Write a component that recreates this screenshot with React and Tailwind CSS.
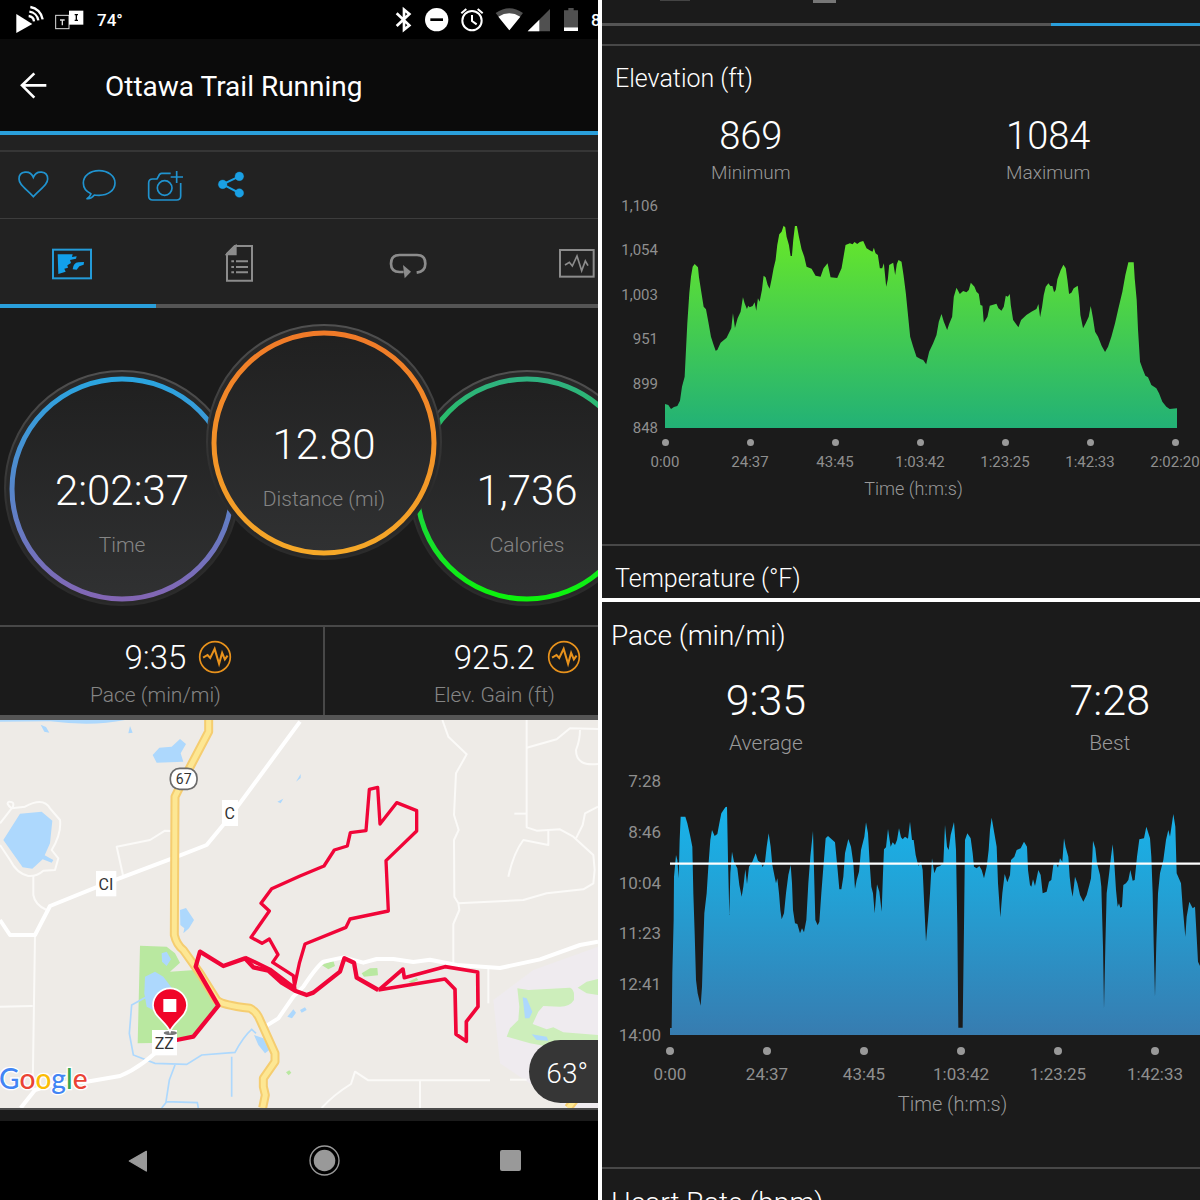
import React from "react";

const ELEVATION =
  "195,642 205,645 213,657 222,651 232,648 240,632 246,590 254,560 258,480 262,400 268,310 273,260 278,230 284,222 294,232 297,262 303,300 311,350 318,358 325,395 333,440 340,462 347,482 352,480 362,458 380,443 394,415 399,370 405,414 413,385 422,365 429,322 434,340 441,357 445,347 449,352 458,348 464,337 469,362 474,325 479,335 486,300 491,257 497,262 503,284 509,296 515,268 521,235 527,210 532,165 538,133 545,125 551,107 556,112 560,140 567,165 572,198 576,198 580,150 585,108 591,108 597,140 605,178 613,200 620,230 635,236 647,257 662,260 671,235 683,220 692,262 712,264 725,235 731,200 737,165 750,160 758,163 764,156 772,162 780,156 790,153 800,175 812,182 818,185 822,173 827,190 834,195 840,235 847,235 852,220 859,290 864,268 868,225 880,218 886,255 891,222 896,210 905,215 911,255 918,310 925,380 931,440 940,470 950,500 962,507 970,510 979,523 988,485 1000,460 1010,435 1017,395 1025,372 1032,395 1042,420 1048,402 1057,380 1062,320 1070,293 1080,312 1090,303 1100,307 1107,300 1113,278 1124,290 1130,305 1137,312 1142,345 1148,347 1152,398 1163,380 1170,347 1190,341 1196,355 1205,362 1212,350 1218,317 1224,320 1230,312 1233,345 1240,390 1256,412 1264,390 1280,375 1295,365 1310,357 1316,342 1321,382 1327,350 1332,315 1338,290 1346,280 1352,288 1358,288 1363,307 1368,300 1373,268 1383,240 1391,224 1398,235 1403,270 1408,312 1415,308 1422,295 1434,287 1438,320 1442,375 1450,415 1458,400 1467,380 1473,348 1479,380 1486,425 1495,440 1506,468 1516,486 1525,470 1535,440 1546,400 1555,360 1568,305 1577,255 1586,217 1602,217 1605,265 1611,330 1615,420 1621,515 1630,540 1637,557 1645,562 1655,585 1670,595 1678,610 1688,635 1700,650 1710,657 1732,655 1732,714 195,714";

const PACE =
  "210,825 210,804 215,804 217,640 221,480 222,350 228,285 232,300 236,355 239,240 242,170 256,170 262,190 270,225 277,260 280,400 284,520 288,660 293,700 302,737 306,680 309,580 313,460 320,400 325,320 331,240 336,210 344,228 352,222 358,190 364,160 376,142 381,140 384,300 388,465 391,340 396,275 402,305 412,325 418,375 425,410 430,380 436,328 441,372 447,320 457,305 467,280 474,302 483,308 488,322 495,305 500,260 506,220 512,260 517,315 524,350 528,370 532,355 537,400 541,450 545,478 552,460 558,400 565,345 572,315 576,370 579,450 585,490 592,492 600,520 606,505 612,517 619,480 625,370 631,290 639,213 642,330 646,480 653,496 658,485 664,400 671,310 677,235 684,228 705,247 712,320 718,388 724,388 730,350 735,280 745,237 753,260 760,310 765,387 770,360 777,335 783,270 793,230 798,187 804,220 809,310 814,380 819,400 824,460 831,373 838,395 845,455 849,340 852,268 858,262 864,207 872,260 878,247 885,255 891,240 897,205 903,232 908,238 915,230 924,236 930,185 936,240 941,240 947,285 955,318 963,305 968,330 973,440 978,545 984,480 990,400 996,295 1003,340 1010,322 1020,318 1030,310 1035,195 1041,260 1046,270 1052,225 1062,186 1068,270 1072,500 1075,803 1088,803 1092,500 1095,240 1102,220 1112,235 1118,280 1122,320 1130,325 1138,318 1145,330 1152,355 1160,320 1166,270 1170,210 1175,173 1183,220 1190,260 1194,370 1201,472 1207,400 1214,342 1222,367 1230,345 1233,300 1243,290 1250,270 1262,265 1272,245 1281,260 1284,330 1290,375 1294,380 1299,358 1305,378 1315,330 1322,345 1328,400 1340,395 1347,365 1354,360 1360,315 1368,310 1374,323 1380,295 1387,305 1392,235 1397,262 1405,290 1409,350 1413,385 1418,410 1425,350 1432,370 1440,405 1450,425 1460,405 1468,375 1473,355 1477,290 1479,242 1486,265 1491,310 1500,345 1504,380 1509,560 1512,748 1516,560 1520,400 1528,335 1533,290 1538,253 1543,310 1548,390 1553,440 1557,430 1561,443 1566,440 1570,375 1578,370 1585,360 1591,330 1598,362 1604,360 1611,290 1618,238 1632,235 1639,200 1650,235 1654,290 1658,400 1661,550 1665,711 1669,550 1674,400 1680,340 1690,300 1698,240 1705,210 1710,230 1720,162 1726,200 1730,340 1743,370 1748,440 1756,530 1760,470 1768,425 1778,445 1785,440 1790,530 1794,605 1800,618 1800,825";

function StatusBar() {
  return (
    <div className="flex h-[39px] shrink-0 items-center bg-black pl-[15px] text-white">
      <svg viewBox="45 15 90 90" className="h-[30px] w-[30px] shrink-0" fill="none" stroke="#fff" strokeWidth="7">
        <path d="M49 42L97 72L49 99Z" fill="#fff" stroke="none" />
        <path d="M91 21A44 44 0 0 1 128 58M88 35A31 31 0 0 1 115 61M86 48A18 18 0 0 1 102 64" />
      </svg>
      <svg viewBox="162 27 93 63" className="ml-[9px] h-[21px] w-[31px] shrink-0">
        <rect x="167" y="46" width="40" height="40" fill="none" stroke="#ddd" strokeWidth="3" />
        <rect x="207" y="32" width="43" height="42" fill="#fff" />
        <path d="M180 60H194M187 60V76" stroke="#ddd" strokeWidth="4" />
        <path d="M224 44H234M229 44V61M224 61H234" stroke="#000" strokeWidth="4" />
      </svg>
      <span className="ml-3 text-[17px] font-medium leading-5">74°</span>
      <div className="ml-auto flex shrink-0 items-center gap-1">
        <svg viewBox="273 18 84 81" className="h-[27px] w-7" fill="none" stroke="#fff" strokeWidth="8">
          <path d="M290 40L328 76L312 89V29L328 42L290 78" />
        </svg>
        <svg viewBox="369 18 96 81" className="h-[27px] w-8">
          <circle cx="410" cy="59" r="35" fill="#fff" />
          <path d="M391 59H429" stroke="#000" strokeWidth="8" />
        </svg>
        <svg viewBox="477 18 96 81" className="h-[27px] w-8" fill="none" stroke="#fff" strokeWidth="6">
          <circle cx="516" cy="62" r="29" />
          <path d="M516 45V63L530 73M484 40L499 27M533 27L548 40" />
        </svg>
        <svg viewBox="585 18 84 81" className="h-[27px] w-7">
          <path d="M587 39Q628 10 669 39L628 91Z" fill="#505050" />
          <path d="M595 50Q628 30 661 50L628 91Z" fill="#fff" />
        </svg>
        <svg viewBox="681 18 72 81" className="h-[27px] w-6">
          <path d="M750 27V94H683Z" fill="#505050" />
          <path d="M718 59V94H683Z" fill="#fff" />
        </svg>
        <svg viewBox="765 18 72 81" className="h-[27px] w-6">
          <path d="M805 24H821V31H834V82H792V31H805Z" fill="#505050" />
          <path d="M792 82H834V93H792Z" fill="#fff" />
        </svg>
        <span className="w-[15px] overflow-hidden pl-2 text-[17px] font-medium leading-5">8</span>
      </div>
    </div>
  );
}

function Actions() {
  const cls = "h-10 w-9";
  const btn = "flex h-full w-[66px] items-center justify-center";
  return (
    <div className="flex h-[66px] shrink-0 items-center">
      <button aria-label="Like" className={btn}>
        <svg viewBox="45 495 108 120" className={cls} fill="none" stroke="#2093cf" strokeWidth="5">
          <path d="M100 590C78 566 57 555 57 537C57 512 91 509 100 532C109 509 143 512 143 537C143 555 122 566 100 590Z" />
        </svg>
      </button>
      <button aria-label="Comment" className={btn}>
        <svg viewBox="243 495 108 120" className={cls} fill="none" stroke="#2093cf" strokeWidth="5" strokeLinejoin="round">
          <path d="M273 581C257 574 250 563 250 549C250 528 270 512 297 512C324 512 345 528 345 549C345 571 324 586 297 586C291 586 286 586 283 585C276 594 268 597 261 596C268 592 271 587 273 581Z" />
        </svg>
      </button>
      <button aria-label="Add photo" className={btn}>
        <svg viewBox="441 495 108 120" className={cls} fill="none" stroke="#2093cf" strokeWidth="5">
          <path d="M512 520H485Q478 520 475 530L471 537H458Q446 537 446 549V588Q446 600 458 600H530Q542 600 542 588V549M530 513V549M512 531H549" />
          <circle cx="494" cy="564" r="22" />
        </svg>
      </button>
      <button aria-label="Share" className={btn}>
        <svg viewBox="636 495 108 120" className={cls} fill="#1aa0e4" stroke="#1aa0e4">
          <path d="M715 529L665 553L715 579" fill="none" strokeWidth="6" />
          <circle cx="665" cy="553" r="13" />
          <circle cx="715" cy="529" r="13" />
          <circle cx="715" cy="579" r="13" />
        </svg>
      </button>
    </div>
  );
}

function Tabs() {
  const tab = "flex h-[89px] w-[168px] shrink-0 items-center justify-center border-b-4 pt-1";
  return (
    <div className="-ml-3 flex shrink-0">
      <button aria-label="Overview" className={tab + " border-[#2a9fdb]"}>
        <svg viewBox="153 738 126 102" className="h-[34px] w-[42px]">
          <rect x="159" y="746" width="114" height="86" fill="none" stroke="#249bd8" strokeWidth="6" />
          <path d="M173 760H218L216 768L230 766L228 773L210 777L213 786L202 793L204 800L193 803L197 812L175 819ZM252 783L251 791L238 796L230 806L218 805Q220 785 235 784Z" fill="#12a0ea" />
        </svg>
      </button>
      <button aria-label="Details" className={tab + " border-[#555]"}>
        <svg viewBox="678 732 90 117" className="h-[39px] w-[30px]" fill="none" stroke="#8c8c8c" strokeWidth="6">
          <path d="M707 738H759V842H684V761Z" />
          <path d="M684 763L710 738V763Z" fill="#8c8c8c" />
          <path d="M697 784H705M711 784H747M697 801H705M711 801H747M697 817H705M711 817H747" />
        </svg>
      </button>
      <button aria-label="Laps" className={tab + " border-[#555]"}>
        <svg viewBox="267 732 120 117" className="h-[39px] w-10" fill="none" stroke="#8c8c8c" strokeWidth="8">
          <path d="M314 816H302Q276 815 276 791Q276 765 302 765H354Q379 765 379 791Q379 814 353 818" />
          <path d="M312 795L336 815L317 835Z" fill="#8c8c8c" stroke="none" />
        </svg>
      </button>
      <button aria-label="Charts" className={tab + " border-[#555]"}>
        <svg viewBox="774 744 114 96" className="h-8 w-[38px]" fill="none" stroke="#8c8c8c">
          <rect x="783" y="750" width="101" height="80" strokeWidth="6" />
          <path d="M798 795L811 787L820 798L834 768L848 812L859 783L867 797" strokeWidth="5" />
        </svg>
      </button>
    </div>
  );
}

function Gauge({ id, value, label, from, to, className }) {
  return (
    <div className={"relative h-[236px] w-[236px] shrink-0 text-center " + className}>
      <svg viewBox="0 0 236 236" className="absolute inset-0 h-full w-full">
        <defs>
          <linearGradient id={id + "-ring"} x1="0" y1="0" x2="0" y2="1">
            <stop offset="0" stopColor={from} />
            <stop offset="1" stopColor={to} />
          </linearGradient>
          <linearGradient id={id + "-face"} x1="0" y1="0" x2="0" y2="1">
            <stop offset="0" stopColor="#202020" />
            <stop offset="1" stopColor="#303132" />
          </linearGradient>
          <linearGradient id={id + "-edge"} x1="0" y1="0" x2="0" y2="1">
            <stop offset="0" stopColor="#505050" />
            <stop offset="0.7" stopColor="#2b2b2b" />
          </linearGradient>
        </defs>
        <circle cx="118" cy="118" r="117" fill="#282828" stroke={"url(#" + id + "-edge)"} strokeWidth="2" />
        <circle cx="118" cy="119" r="110" fill={"url(#" + id + "-face)"} stroke={"url(#" + id + "-ring)"} strokeWidth="5" />
      </svg>
      <div className="relative pt-[97px]">
        <div className="text-[42px] font-light leading-[48px] text-white">{value}</div>
        <div className="mt-[18px] text-[21px] font-light leading-6 text-[#858585]">{label}</div>
      </div>
    </div>
  );
}

function Stat({ value, label, className }) {
  return (
    <div className={"flex shrink-0 flex-col items-center pb-2 pt-[11px] " + className}>
      <div className="relative">
        <span className="block text-[33px] font-light leading-10 text-white">{value}</span>
        <button aria-label={"Show chart of " + label} className="absolute left-full top-0.5 ml-3">
          <svg viewBox="597 60 100 100" className="h-[34px] w-[34px]" fill="none" stroke="#e8921c" strokeWidth="5">
            <circle cx="647" cy="110" r="45" />
            <path d="M612 112L625 104L633 113L646 86L659 130L668 98L676 117L684 106" strokeWidth="6" />
          </svg>
        </button>
      </div>
      <span className="mt-[5px] text-[21px] font-light leading-6 text-[#858585]">{label}</span>
    </div>
  );
}

const MINOR_ROADS = [
  "M1327 300L1345 350L1400 403L1368 460L1362 585L1376 630L1362 660L1363 830L1375 850L1378 870L1360 912V1030",
  "M1375 850L1570 840L1640 820L1750 808L1780 790L1784 750L1780 705L1720 650L1680 628L1610 632L1580 622V300",
  "M1580 383L1670 358L1710 325L1794 327",
  "M1740 330Q1740 360 1728 390Q1728 440 1794 432",
  "M1645 628V675L1570 660Q1540 700 1525 770",
  "M1794 560L1755 580L1748 615L1728 655",
  "M1543 581H1578",
  "M1465 1040V1150",
  "M965 1464Q1000 1425 1053 1392L1065 1355L1105 1381H1470M1260 1381V1464M1530 1379H1580",
  "M105 945L98 1410M0 1160L98 1158",
  "M100 765V825Q105 855 140 870",
  "M35 565L75 560Q130 530 150 565L180 600Q185 640 155 690L175 715L165 750L130 752Q110 770 85 768Q50 760 30 720L0 675",
  "M0 610L35 565Q15 550 28 545Q45 545 38 562",
  "M370 770L350 680L450 660L495 632L515 633",
];

const HIGHWAY =
  "M626 300V335L555 470L525 530L523 945Q530 975 550 990L600 1060L650 1140Q665 1155 750 1165Q770 1175 780 1200L825 1300V1325L790 1375V1400L796 1425L788 1464M1705 1464L1735 1425";

function RouteMap() {
  return (
    <svg viewBox="0 300 1794 1164" className="block w-full bg-[#eeebe7]" role="img" aria-label="Route map">
      <path d="M1480 1140L1600 1050L1794 980V1464H1700L1500 1330Z" fill="#efebef" />
      <g fill="#b9e8a0">
        <path d="M420 977L500 980L525 1000L540 1028L510 1055L585 1050L655 1155L580 1250L500 1268L413 1270Z" />
        <path d="M965 1035L1000 1022L1005 1038L985 1048ZM1085 1060L1110 1045L1132 1044L1134 1066L1092 1070ZM1225 1085L1250 1073L1255 1080L1235 1090ZM858 1357L868 1351L874 1358L866 1366Z" />
        <path d="M1552 1105L1585 1110L1710 1103Q1722 1108 1722 1125V1140Q1710 1160 1680 1160L1630 1158L1615 1175L1598 1212L1640 1228L1660 1222L1690 1237L1794 1245V1290H1700L1590 1270L1520 1250L1530 1225L1555 1200L1558 1160ZM1733 1103L1760 1085L1794 1077V1125L1760 1120Z" fill="#cdeebb" />
      </g>
      <g fill="#add8fd">
        <path d="M60 581L125 575L157 602L150 670L134 706L160 720L155 728L128 718L97 746L68 742L10 660Z" />
        <path d="M478 383L515 380L540 357L558 372L542 400L550 425L470 428L458 405Z" />
        <path d="M122 314L138 321L148 338L133 335ZM390 318L398 338L385 340ZM0 300H375Q280 320 150 304L0 305ZM832 545L850 536L842 550ZM888 485L902 462V474Z" />
        <path d="M540 870L558 864L582 900L567 925L550 940L553 925L541 915ZM485 1000L500 995L513 1018L500 1038L486 1025Z" />
        <path d="M435 1070L465 1055L490 1070L520 1110L500 1190L440 1160L433 1120Z" />
        <path d="M762 1245L790 1255L808 1290L795 1300L775 1275ZM862 1190L880 1168L888 1178L876 1195ZM900 1170L915 1162L920 1170L905 1178Z" />
        <path d="M1568 1132L1580 1135L1597 1175L1588 1195L1575 1195ZM1595 1243L1640 1250L1645 1262L1610 1260Z" />
      </g>
      <path d="M440 1130L395 1155L388 1240L400 1305L465 1330L560 1333L605 1305L705 1297Q730 1250 755 1228L768 1240M525 1335L508 1380L498 1445L592 1448L595 1464M695 1310V1430M500 1445L485 1464" fill="none" stroke="#add8fd" strokeWidth="5" />
      <g fill="none" stroke="#fbfaf8" strokeWidth="6" strokeLinejoin="round">
        {MINOR_ROADS.map((d) => (
          <path key={d} d={d} />
        ))}
      </g>
      <path
        d="M900 305L690 590L620 675L525 712L318 790L150 858L105 945H30L0 900M500 1265Q430 1340 360 1368L260 1385L170 1390L105 1410L62 1464M795 1220L835 1195L880 1130L910 1100Q950 1040 970 1025L1030 1012L1090 1028L1130 1017H1180L1240 1026L1290 1019L1370 1035L1500 1044L1620 1018L1740 975L1794 965"
        fill="none"
        stroke="#fff"
        strokeWidth="12"
        strokeLinejoin="round"
      />
      <g fill="none" strokeLinejoin="round">
        <path d={HIGHWAY} stroke="#f5cd70" strokeWidth="27" />
        <path d={HIGHWAY} stroke="#fde793" strokeWidth="15" />
      </g>
      <g fill="none" stroke="#f00538" strokeLinejoin="round">
        <path d="M530 1260L580 1250L655 1157L587 1040L600 995L670 1038L735 1015L760 1042L805 1052L845 1088L885 1112L920 1125L940 1118L1020 1055L1033 1015L1062 1028L1070 1073L1135 1110" strokeWidth="13" />
        <path d="M735 1012L810 1048L885 1105M1135 1110L1335 1077L1365 1108L1368 1243L1399 1264V1205L1434 1160L1433 1056L1335 1040L1213 1073L1209 1047L1140 1107" strokeWidth="11" />
        <path d="M885 1110L880 1067L818 1027L834 1004L808 957L786 970L753 952L808 873L783 850L815 806L900 768L972 738L1003 690L1042 678L1051 638L1098 632L1108 508L1133 502L1140 612L1190 548L1250 572V633L1158 722L1165 873L1050 897L1038 922L915 972L898 1030L882 1105" strokeWidth="10" />
      </g>
      <g fontFamily="Roboto, sans-serif" fill="#333" textAnchor="middle">
        <rect x="511" y="445" width="80" height="63" rx="28" fill="#fff" stroke="#6b6b6b" strokeWidth="5" />
        <text x="551" y="491" fontSize="42">67</text>
        <rect x="666" y="540" width="48" height="78" fill="#fff" />
        <text x="689" y="598" fontSize="48">C</text>
        <rect x="288" y="753" width="61" height="76" fill="#fff" />
        <text x="318" y="810" fontSize="48">CI</text>
        <rect x="456" y="1230" width="75" height="76" fill="#fff" />
        <text x="493" y="1287" fontSize="48">ZZ</text>
      </g>
      <ellipse cx="511" cy="1239" rx="20" ry="6" fill="#777" />
      <path d="M510 1235C500 1205 459 1190 459 1156A51 51 0 0 1 561 1156C561 1190 520 1205 510 1235Z" fill="#f00528" stroke="#fff" strokeWidth="5" />
      <rect x="490" y="1137" width="39" height="39" fill="#fff" />
      <text x="-3" y="1406" fontFamily="Lato, sans-serif" fontSize="84" fontWeight="500" stroke="#fff" strokeWidth="8" paintOrder="stroke">
        <tspan fill="#4285f4">G</tspan>
        <tspan fill="#ea4335">o</tspan>
        <tspan fill="#fbbc05">o</tspan>
        <tspan fill="#4285f4">g</tspan>
        <tspan fill="#34a853">l</tspan>
        <tspan fill="#ea4335">e</tspan>
      </text>
    </svg>
  );
}

function ActivityScreen() {
  return (
    <section className="row-span-2 flex min-w-0 flex-col overflow-hidden bg-[#1b1b1b]">
      <StatusBar />
      <header className="flex h-24 shrink-0 items-center border-b-4 border-[#2a9fdb] bg-[#0b0b0b] pl-[18px]">
        <button aria-label="Back">
          <svg viewBox="54 210 96 93" className="h-[31px] w-8" fill="none" stroke="#fff" strokeWidth="8">
            <path d="M139 256H66M103 220L66 256L103 293" />
          </svg>
        </button>
        <h1 className="ml-[55px] pt-1 text-[28px] leading-8 text-white">Ottawa Trail Running</h1>
      </header>
      <div className="bg-[#222]">
        <div className="h-[17px] border-b-2 border-[#363636]" />
        <Actions />
        <div className="border-b border-[#3d3d3d]" />
        <Tabs />
      </div>
      <div className="flex shrink-0 items-start pb-[19px] pl-1 pt-4">
        <Gauge id="time" value="2:02:37" label="Time" from="#2aa5e0" to="#8366b4" className="mt-[46px]" />
        <Gauge id="distance" value="12.80" label="Distance (mi)" from="#f07a28" to="#f5a828" className="z-10 -ml-[34px]" />
        <Gauge id="calories" value="1,736" label="Calories" from="#2fb180" to="#0cf30c" className="-ml-[33px] mt-[46px]" />
      </div>
      <div className="flex shrink-0 border-b-[5px] border-t-2 border-b-[#555] border-t-[#484848]">
        <Stat value="9:35" label="Pace (min/mi)" className="w-[54%] pr-3" />
        <Stat value="925.2" label="Elev. Gain (ft)" className="w-[57%] border-l-2 border-[#484848]" />
      </div>
      <div className="relative shrink-0">
        <RouteMap />
        <div className="absolute bottom-[5px] right-0 flex h-[63px] items-center rounded-l-full bg-[#363636] pl-[17px] pr-[10px] pt-1 text-[28px] font-light text-white">
          63°
        </div>
      </div>
      <div className="h-[13px] shrink-0 border-t-2 border-[#4a4a4a]" />
      <nav className="flex flex-1 items-center bg-black pl-[45px]">
        <button aria-label="Back" className="flex w-[186px] shrink-0 justify-center">
          <svg viewBox="384 746 60 72" className="h-6 w-5" fill="#999" stroke="#999" strokeWidth="4" strokeLinejoin="round">
            <path d="M388 782L439 753V812Z" />
          </svg>
        </button>
        <button aria-label="Home" className="flex w-[186px] shrink-0 justify-center">
          <svg viewBox="27 735 92 92" className="h-[31px] w-[31px]">
            <circle cx="73" cy="781" r="32" fill="#999" />
            <circle cx="73" cy="781" r="43" fill="none" stroke="#999" strokeWidth="4" />
          </svg>
        </button>
        <button aria-label="Recent apps" className="flex w-[186px] shrink-0 justify-center">
          <span className="h-[21px] w-[21px] rounded-[2px] bg-[#999]" />
        </button>
      </nav>
    </section>
  );
}

function XAxis({ ticks, dot, label }) {
  return (
    <div className="flex justify-between">
      {ticks.map((t) => (
        <div key={t} className="flex w-0 flex-col items-center">
          <span className={"rounded-full bg-[#999] " + dot} />
          <span className={"whitespace-nowrap leading-5 " + label}>{t}</span>
        </div>
      ))}
    </div>
  );
}

function Extreme({ value, label, big, small }) {
  return (
    <div className="text-center font-light">
      <div className={"leading-[48px] text-white " + big}>{value}</div>
      <div className={"leading-6 text-[#999] " + small}>{label}</div>
    </div>
  );
}

const TIMES = ["0:00", "24:37", "43:45", "1:03:42", "1:23:25", "1:42:33", "2:02:20"];

function ElevationPanel() {
  return (
    <section className="min-w-0 overflow-hidden bg-[#1b1b1b] text-[#8f8f8f]">
      <div className="h-[23px]">
        <svg viewBox="0 0 598 23" preserveAspectRatio="none" className="h-full w-full">
          <path d="M211 0H234V3H211Z" fill="#777" />
          <path d="M58 0H88V1H58Z" fill="#444" />
        </svg>
      </div>
      <div className="flex h-[3px] bg-[#555]">
        <div className="ml-auto w-1/4 bg-[#2a9fdb]" />
      </div>
      <div className="h-5 border-b-2 border-[#484848]" />
      <h2 className="pl-[13px] pt-[17px] text-[25px] font-light leading-8 text-white">Elevation (ft)</h2>
      <div className="mt-[17px] grid grid-cols-2 pr-[3px]">
        <Extreme value="869" label="Minimum" big="text-[38px]" small="pt-px text-[19px]" />
        <Extreme value="1084" label="Maximum" big="text-[38px]" small="pt-px text-[19px]" />
      </div>
      <div className="mt-[11px] flex pr-[23px]">
        <div className="mr-[7px] flex w-14 shrink-0 flex-col justify-between text-right text-[15px] leading-5">
          {["1,106", "1,054", "1,003", "951", "899", "848"].map((t) => (
            <span key={t}>{t}</span>
          ))}
        </div>
        <div className="min-w-0 flex-1 py-[10px]">
          <svg viewBox="195 48 1537 666" preserveAspectRatio="none" className="block h-[222px] w-full">
            <linearGradient id="elev" gradientUnits="userSpaceOnUse" x1="0" y1="48" x2="0" y2="714">
              <stop offset="0" stopColor="#6fee20" />
              <stop offset="1" stopColor="#22b176" />
            </linearGradient>
            <polygon points={ELEVATION} fill="url(#elev)" />
          </svg>
        </div>
      </div>
      <div className="mt-px pl-[63px] pr-[25px]">
        <XAxis ticks={TIMES} dot="h-[7px] w-[7px]" label="mt-[6px] text-[15px]" />
      </div>
      <p className="mt-[5px] pl-[25px] text-center text-[18px] font-light leading-6 text-[#999]">Time (h:m:s)</p>
      <div className="mt-[43px] border-t-2 border-[#484848] pb-[3px] pl-[13px] pt-[17px]">
        <h2 className="text-[25px] font-light leading-8 text-white">Temperature (°F)</h2>
      </div>
    </section>
  );
}

function PacePanel() {
  return (
    <section className="min-w-0 overflow-hidden bg-[#1b1b1b] text-[#8f8f8f]">
      <h2 className="pl-[9px] pt-[18px] text-[28px] font-light leading-8 text-white">Pace (min/mi)</h2>
      <div className="-ml-2 mt-6 grid w-[115%] grid-cols-2">
        <Extreme value="9:35" label="Average" big="text-[43px]" small="pt-[7px] text-[21px]" />
        <Extreme value="7:28" label="Best" big="text-[43px]" small="pt-[7px] text-[21px]" />
      </div>
      <div className="mt-4 flex">
        <div className="mr-[9px] flex w-[59px] shrink-0 flex-col justify-between text-right text-[17px] leading-5">
          {["7:28", "8:46", "10:04", "11:23", "12:41", "14:00"].map((t) => (
            <span key={t}>{t}</span>
          ))}
        </div>
        <div className="min-w-0 flex-1 pb-[10px] pt-[9px]">
          <svg viewBox="210 60 1590 765" preserveAspectRatio="none" className="block h-[255px] w-full">
            <linearGradient id="pace" gradientUnits="userSpaceOnUse" x1="0" y1="100" x2="0" y2="825">
              <stop offset="0" stopColor="#16b6ee" />
              <stop offset="0.4" stopColor="#22a2d6" />
              <stop offset="1" stopColor="#377cb0" />
            </linearGradient>
            <polygon points={PACE} fill="url(#pace)" />
            <path d="M210 311H1800" stroke="#fff" strokeWidth="7" />
          </svg>
        </div>
      </div>
      <div className="mt-[2px] pl-[68px] pr-[45px]">
        <XAxis ticks={TIMES.slice(0, 6)} dot="h-2 w-2" label="mt-[9px] text-[17px]" />
      </div>
      <p className="mt-2 pl-[103px] text-center text-[20px] font-light leading-6 text-[#999]">Time (h:m:s)</p>
      <div className="mt-[51px] border-t-2 border-[#484848] pl-[9px] pt-[18px]">
        <h2 className="h-[13px] overflow-hidden text-[28px] font-light leading-8 text-white">Heart Rate (bpm)</h2>
      </div>
    </section>
  );
}

export default function App() {
  return (
    <main className="grid min-h-screen grid-cols-2 grid-rows-2 gap-1 bg-white font-['Roboto',sans-serif]">
      <ActivityScreen />
      <ElevationPanel />
      <PacePanel />
    </main>
  );
}
